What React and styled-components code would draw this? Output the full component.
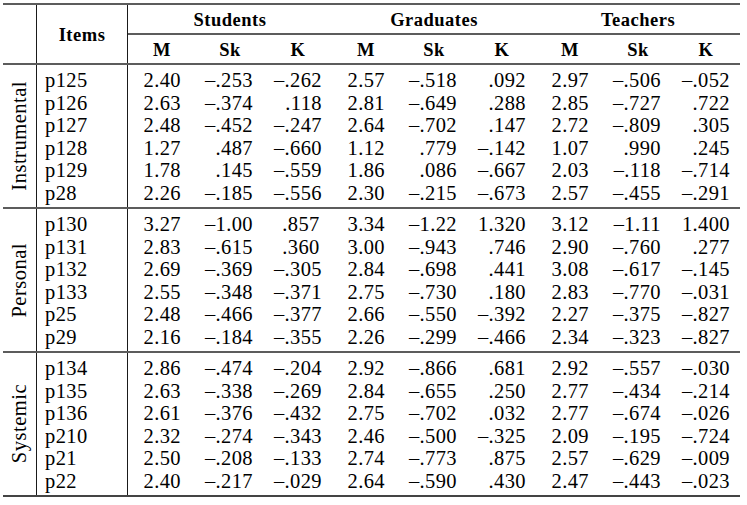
import React from "react";
import styled, { createGlobalStyle } from "styled-components";

const Global = createGlobalStyle`
  * { box-sizing: border-box; }
  html, body { margin: 0; padding: 0; background: #fff; }
`;

const Table = styled.div`
  width: 737px;
  margin: 3px 0 0 3px;
  border-top: 2px solid #5c5c5c;
  border-bottom: 2px solid #444;
  font-family: "Liberation Serif", "Times New Roman", serif;
  color: #000;
`;

const Header = styled.div`
  display: grid;
  grid-template-columns: 34px 91px 612px;
  height: 60px;
  border-bottom: 2px solid #5c5c5c;
`;

const Corner = styled.div`
  border-right: 1px solid #1a1a1a;
`;

const HeadText = styled.div`
  display: flex;
  align-items: center;
  justify-content: center;
  font-weight: 700;
  font-size: 18.5px;
  letter-spacing: 0.5px;
  padding-top: 3px;
`;

const ItemsHead = styled(HeadText)`
  border-right: 1px solid #1a1a1a;
`;

const GroupsHead = styled.div`
  display: grid;
  grid-template-rows: 30px 1fr;
`;

const GroupNames = styled.div`
  display: grid;
  grid-template-columns: repeat(3, 204px);
  border-bottom: 2px solid #5c5c5c;
`;

const SubHeads = styled.div`
  display: grid;
  grid-template-columns: repeat(9, 68px);
`;

const Section = styled.div`
  display: flex;
  border-bottom: ${(p) => (p.$last ? "none" : "2px solid #5c5c5c")};
`;

const Label = styled.div`
  width: 34px;
  flex: none;
  border-right: 1px solid #1a1a1a;
  display: flex;
  align-items: center;
  justify-content: center;
`;

const LabelText = styled.span`
  writing-mode: vertical-rl;
  transform: rotate(180deg);
  font-size: 20.5px;
  letter-spacing: 0.5px;
  line-height: 1;
  padding-left: 1px;
`;

const ItemsCol = styled.div`
  width: 91px;
  flex: none;
  border-right: 1px solid #1a1a1a;
  padding: 4px 0 3px 8px;
`;

const DataCol = styled.div`
  width: 612px;
  padding: 4px 0 3px;
`;

const Item = styled.div`
  height: 22.5px;
  line-height: 22.5px;
  font-size: 20.5px;
  letter-spacing: 0.4px;
`;

const Row = styled.div`
  display: grid;
  grid-template-columns: repeat(9, 68px);
  height: 22.5px;
`;

const pads = { M: 15, Sk: 11, K: 10 };

const Num = styled.div`
  font-size: 20.5px;
  letter-spacing: 0.4px;
  line-height: 22.5px;
  white-space: nowrap;
  text-align: ${(p) => (p.$center ? "center" : "right")};
  padding-right: ${(p) => (p.$center ? 0 : pads[p.$kind])}px;
  padding-left: ${(p) => (p.$center ? 6 : 0)}px;
`;

const kinds = ["M", "Sk", "K", "M", "Sk", "K", "M", "Sk", "K"];

const sections = [
  {
    name: "Instrumental",
    rows: [
      ["p125", "2.40", "–.253", "–.262", "2.57", "–.518", ".092", "2.97", "–.506", "–.052"],
      ["p126", "2.63", "–.374", ".118", "2.81", "–.649", ".288", "2.85", "–.727", ".722"],
      ["p127", "2.48", "–.452", "–.247", "2.64", "–.702", ".147", "2.72", "–.809", ".305"],
      ["p128", "1.27", ".487", "–.660", "1.12", ".779", "–.142", "1.07", ".990", ".245"],
      ["p129", "1.78", ".145", "–.559", "1.86", ".086", "–.667", "2.03", "–.118", "–.714"],
      ["p28", "2.26", "–.185", "–.556", "2.30", "–.215", "–.673", "2.57", "–.455", "–.291"],
    ],
  },
  {
    name: "Personal",
    rows: [
      ["p130", "3.27", "–1.00", ".857", "3.34", "–1.22", "1.320", "3.12", "–1.11", "1.400"],
      ["p131", "2.83", "–.615", ".360", "3.00", "–.943", ".746", "2.90", "–.760", ".277"],
      ["p132", "2.69", "–.369", "–.305", "2.84", "–.698", ".441", "3.08", "–.617", "–.145"],
      ["p133", "2.55", "–.348", "–.371", "2.75", "–.730", ".180", "2.83", "–.770", "–.031"],
      ["p25", "2.48", "–.466", "–.377", "2.66", "–.550", "–.392", "2.27", "–.375", "–.827"],
      ["p29", "2.16", "–.184", "–.355", "2.26", "–.299", "–.466", "2.34", "–.323", "–.827"],
    ],
    centered: [[0, 2], [1, 2]],
  },
  {
    name: "Systemic",
    rows: [
      ["p134", "2.86", "–.474", "–.204", "2.92", "–.866", ".681", "2.92", "–.557", "–.030"],
      ["p135", "2.63", "–.338", "–.269", "2.84", "–.655", ".250", "2.77", "–.434", "–.214"],
      ["p136", "2.61", "–.376", "–.432", "2.75", "–.702", ".032", "2.77", "–.674", "–.026"],
      ["p210", "2.32", "–.274", "–.343", "2.46", "–.500", "–.325", "2.09", "–.195", "–.724"],
      ["p21", "2.50", "–.208", "–.133", "2.74", "–.773", ".875", "2.57", "–.629", "–.009"],
      ["p22", "2.40", "–.217", "–.029", "2.64", "–.590", ".430", "2.47", "–.443", "–.023"],
    ],
  },
];

export default function App() {
  return (
    <>
      <Global />
      <Table>
        <Header>
          <Corner />
          <ItemsHead>Items</ItemsHead>
          <GroupsHead>
            <GroupNames>
              <HeadText>Students</HeadText>
              <HeadText>Graduates</HeadText>
              <HeadText>Teachers</HeadText>
            </GroupNames>
            <SubHeads>
              {kinds.map((k, i) => (
                <HeadText key={i}>{k}</HeadText>
              ))}
            </SubHeads>
          </GroupsHead>
        </Header>
        {sections.map((s, si) => (
          <Section key={s.name} $last={si === sections.length - 1}>
            <Label>
              <LabelText>{s.name}</LabelText>
            </Label>
            <ItemsCol>
              {s.rows.map((r) => (
                <Item key={r[0]}>{r[0]}</Item>
              ))}
            </ItemsCol>
            <DataCol>
              {s.rows.map((r, ri) => (
                <Row key={r[0]}>
                  {r.slice(1).map((v, ci) => (
                    <Num
                      key={ci}
                      $kind={kinds[ci]}
                      $center={(s.centered || []).some(([a, b]) => a === ri && b === ci)}
                    >
                      {v}
                    </Num>
                  ))}
                </Row>
              ))}
            </DataCol>
          </Section>
        ))}
      </Table>
    </>
  );
}
